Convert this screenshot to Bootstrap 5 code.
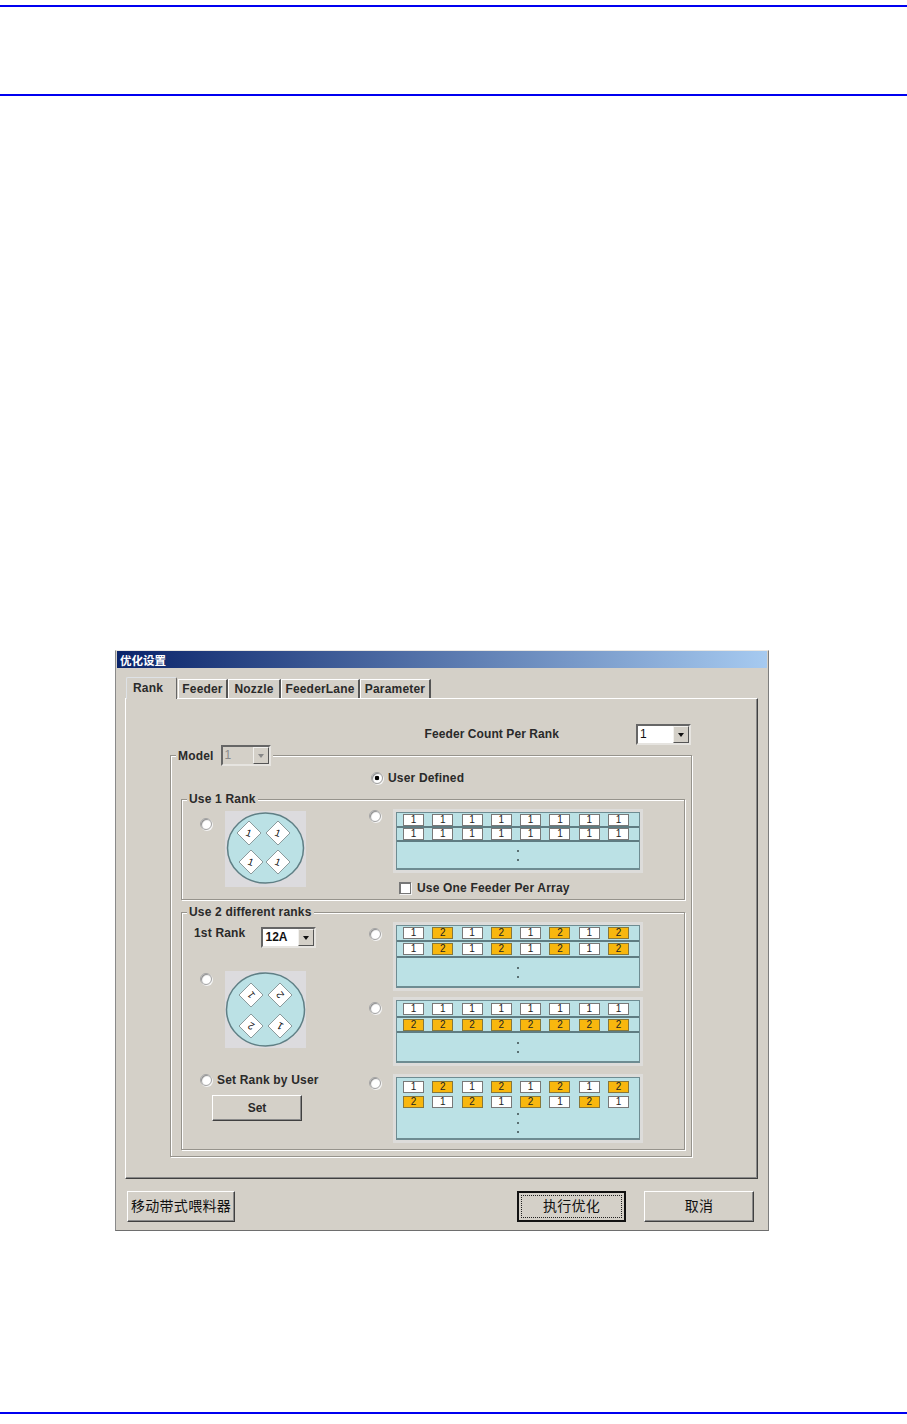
<!DOCTYPE html>
<html lang="zh">
<head>
<meta charset="utf-8">
<title>优化设置</title>
<link href="https://cdn.jsdelivr.net/npm/bootstrap@5.3.0/dist/css/bootstrap.min.css" rel="stylesheet">
<style>
html,body{background:#fff;margin:0}
body{width:907px;height:1424px;overflow:hidden;font-family:"Liberation Sans","Noto Sans CJK SC",sans-serif;font-size:12px;font-weight:700;color:#2a2a2a;letter-spacing:.18px;line-height:14px}
.rule-head{margin-top:5px;height:91px;border-top:2px solid #0000f0;border-bottom:2px solid #0000f0}
.rule-foot{margin-top:181px;border-top:2px solid #0000f0}
.dlg{margin:554px 0 0 115px;width:654px;height:581px;background:#d4d0c8;border:1px solid;border-color:#e9e7e3 #7d7d7d #6e6e6e #8a8a8a;padding:0 1px}
.dlg-title{height:17px;background:linear-gradient(90deg,#0a246a,#a6caf0);color:#fff;font-size:11.5px;line-height:19px;letter-spacing:0;padding-left:3px;font-family:"Noto Sans CJK SC",sans-serif;overflow:hidden}
.dlg-tabs{margin:8px 0 0 9px;height:22px;border:0;flex-wrap:nowrap;gap:0;align-items:flex-end}
.dlg-tabs .nav-link{margin:0;padding:0;height:19px;line-height:19px;text-align:center;color:#2a2a2a;background:#d4d0c8;border:0;border-radius:0;border-left:1px solid #fff;border-top:1px solid #fff;border-right:2px solid #555}
.dlg-tabs .nav-link.active{height:22px;line-height:20px;border-right:1px solid #666;border-radius:2px 2px 0 0;margin-right:1px;text-align:left;padding-left:6px;position:relative;z-index:1;margin-bottom:-1px;background:#d4d0c8;color:#2a2a2a}
.w-a{width:51px}.w-b{width:50px}.w-c{width:53px}.w-d{width:79px}.w-e{width:71px}
.dlg-panel{margin-left:8px;width:633px;height:481px;border:1px solid;border-color:#fff #404040 #404040 #fff;box-shadow:inset -1px -1px 0 #8a8a8a;padding-top:25px}
.count-row{height:21px;margin-right:66px}
.count-label{letter-spacing:.08px;margin-top:-2px}
.count-row .combo{margin-left:77px}
.combo{width:55px;height:21px;flex:none;background:#fff;border:2px solid;border-color:#666 #e6e4e0 #e6e4e0 #666;padding-left:2px;line-height:17px;font-weight:400;color:#111;letter-spacing:0;font-size:12px}
.combo-wide{font-weight:700}
.combo-off{width:50px;background:#d4d0c8;color:#8a8a8a}
.combo-arrow{width:16px;height:17px;background:#d4d0c8;border:1px solid;border-color:#f2f1ee #555 #555 #f2f1ee;position:relative}
.combo-arrow::after{content:"";position:absolute;left:4px;top:6px;border:3.5px solid transparent;border-top:4px solid #111;border-bottom:0}
.combo-off .combo-arrow::after{border-top-color:#888}
.etch{border:1px solid #96938c;box-shadow:1px 1px 0 #fff,inset 1px 1px 0 #fff;position:relative}
.group-model{margin:10px 0 0 44px;width:522px;height:402px;padding-top:15px}
.tag{position:absolute;background:#d4d0c8;padding:0 2px;line-height:14px}
.tag-model{left:5px;top:-11px;gap:7px}
.tag-one{left:5px;top:-8px}
.row-defined{margin-left:200px;height:14px;gap:5px}
.group-one{margin:14px 0 0 10px;width:504px;height:101px}
.group-two{margin:12px 0 0 10px;width:504px;height:238px}
.form-check-input.rd{width:12px;height:12px;margin:0;flex:none;float:none;border:1px solid #a2a2a2;background:#fff;box-shadow:inset 1px 1px 1px #8b8b8b,1px 1px 0 #f4f4f4;--bs-form-check-bg-image:none;opacity:1}
.form-check-input.rd:checked{background:radial-gradient(circle,#000 0,#000 2px,#fff 2.6px);border-color:#a2a2a2}
.form-check-input.ck{width:12px;height:12px;margin:0;float:none;flex:none;border:1px solid #777;border-radius:0;background:#fff;box-shadow:inset 1px 1px 0 #777,1px 1px 0 #f4f4f4}
.col-left{width:187px;flex:none}
.one-left{padding:11px 0 0 18px;gap:13px}
.one-left .rd{margin-top:7px}
.disc-box{width:81px;height:76px;background:#dcdbde;display:block;flex:none}
.disc-tall{height:77px}
.one-right{padding-top:12px}
.opt-row{gap:15px}
.one-right .rd{margin-top:-2px}
.check-row{margin:12px 0 0 30px;gap:6px;line-height:12px}
.rank-row{margin:14px 0 0 12px;height:21px}
.rank-row .combo{margin-left:16px}
.rank-label{margin-top:-1px}
.two-disc{margin:23px 0 0 18px;gap:13px}
.two-disc .rd{margin-top:2px}
.two-set{margin:25px 0 0 18px;gap:5px}
.set-btn{display:block;margin:8px 0 0 30px;width:90px;height:26px}
.btn.flat{--bs-btn-padding-y:0;--bs-btn-padding-x:0;--bs-btn-font-size:12px;--bs-btn-font-weight:700;--bs-btn-line-height:1;--bs-btn-color:#2a2a2a;--bs-btn-bg:#d4d0c8;--bs-btn-hover-bg:#d4d0c8;--bs-btn-hover-color:#2a2a2a;border:1px solid;border-color:#fff #404040 #404040 #fff;border-radius:0;box-shadow:inset -1px -1px 0 #8a8a8a}
.two-right{padding-top:12px}
.rd.off-a{margin-top:3px}.rd.off-b{margin-top:2px}
.gap-a{margin-top:12px}.gap-b{margin-top:14px}
.arr{width:244px;background:#bbe1e5;border:1px solid #6e8c92;border-bottom-width:2px;box-shadow:0 0 0 3px #dddcda;height:63px}
.arr-short{height:58px}
.arr-line{padding:0 10px 0 6px;border-bottom:2px solid #5f7c82;height:16px}
.arr-line.h15{height:15px}.arr-line.h14{height:14px}.arr-line.h17{height:17px}
.arr-line.free{border:0;height:15px;padding-top:2px}
.cl{width:21px;height:12px;border:1px solid #787878;background:#fff;font-size:10px;line-height:10px;font-weight:400;text-align:center;color:#222;letter-spacing:0}
.cl.o{background:#f8b70e;border-color:#87773a}
.arr-foot{gap:7px}
.dt{width:2px;height:2px;background:#3a4a4c;border-radius:50%}
.dlg-foot{margin:12px 0 0 10px;width:628px;height:31px}
.btn.flat.cn-btn{--bs-btn-font-size:14px;--bs-btn-font-weight:400;--bs-btn-color:#111;--bs-btn-hover-color:#111;font-family:"Noto Sans CJK SC",sans-serif;letter-spacing:.3px;padding-bottom:3px}
.w-move{width:108px}
.w-run{width:109px;margin-left:282px;border:2px solid #111!important;box-shadow:none!important;position:relative}
.w-run::after{content:"";position:absolute;inset:2px;border:1px dotted #222}
.w-cancel{width:110px;margin-left:18px}
</style>
</head>
<body>
<div class="rule-head"></div>
<div class="dlg d-flex flex-column">
  <div class="dlg-title">优化设置</div>
  <ul class="nav nav-tabs dlg-tabs">
    <li class="nav-item"><a class="nav-link active w-a" href="#">Rank</a></li>
    <li class="nav-item"><a class="nav-link w-b" href="#">Feeder</a></li>
    <li class="nav-item"><a class="nav-link w-c" href="#">Nozzle</a></li>
    <li class="nav-item"><a class="nav-link w-d" href="#">FeederLane</a></li>
    <li class="nav-item"><a class="nav-link w-e" href="#">Parameter</a></li>
  </ul>
  <div class="dlg-panel">
    <div class="count-row d-flex justify-content-end align-items-center">
      <span class="count-label">Feeder Count Per Rank</span>
      <div class="combo d-flex justify-content-between align-items-center"><span>1</span><span class="combo-arrow"></span></div>
    </div>
    <div class="etch group-model">
      <div class="tag tag-model d-flex align-items-center">
        <span>Model</span>
        <div class="combo combo-off d-flex justify-content-between align-items-center"><span>1</span><span class="combo-arrow"></span></div>
      </div>
      <div class="row-defined d-flex align-items-center"><input class="form-check-input rd" type="radio" name="a" checked><span>User Defined</span></div>

      <div class="etch group-one d-flex">
        <span class="tag tag-one">Use 1 Rank</span>
        <div class="col-left one-left d-flex align-items-start">
          <input class="form-check-input rd" type="radio" name="a">
          <svg class="disc-box" viewBox="0 0 81 76">
            <ellipse cx="40.500" cy="37" rx="38" ry="35" fill="#bbe1e5" stroke="#5f7f85" stroke-width="1.500"/>
            <g fill="#fff" stroke="#8b9a9c"><path d="M24 10l12 12-12 12-12-12z"/><path d="M53 10l12 12-12 12-12-12z"/><path d="M26 39l12 12-12 12-12-12z"/><path d="M53 39l12 12-12 12-12-12z"/></g>
            <g font-size="10" font-weight="400" text-anchor="middle" fill="#111" font-family="Liberation Sans">
              <text transform="translate(24 22) rotate(20)" y="3.500">1</text>
              <text transform="translate(53 22) rotate(20)" y="3.500">1</text>
              <text transform="translate(26 51) rotate(20)" y="3.500">1</text>
              <text transform="translate(53 51) rotate(20)" y="3.500">1</text>
            </g>
          </svg>
        </div>
        <div class="one-right d-flex flex-column">
          <div class="opt-row d-flex align-items-start">
            <input class="form-check-input rd" type="radio" name="a">
            <div class="arr arr-short d-flex flex-column">
              <div class="arr-line h15 d-flex justify-content-between align-items-center"><span class="cl">1</span><span class="cl">1</span><span class="cl">1</span><span class="cl">1</span><span class="cl">1</span><span class="cl">1</span><span class="cl">1</span><span class="cl">1</span></div>
              <div class="arr-line h14 d-flex justify-content-between align-items-center"><span class="cl">1</span><span class="cl">1</span><span class="cl">1</span><span class="cl">1</span><span class="cl">1</span><span class="cl">1</span><span class="cl">1</span><span class="cl">1</span></div>
              <div class="arr-foot flex-grow-1 d-flex flex-column align-items-center justify-content-center"><span class="dt"></span><span class="dt"></span></div>
            </div>
          </div>
          <div class="check-row d-flex align-items-center"><input class="form-check-input ck" type="checkbox"><span>Use One Feeder Per Array</span></div>
        </div>
      </div>

      <div class="etch group-two d-flex">
        <span class="tag tag-one">Use 2 different ranks</span>
        <div class="col-left d-flex flex-column">
          <div class="rank-row d-flex align-items-start"><span class="rank-label">1st Rank</span><div class="combo combo-wide d-flex justify-content-between align-items-center"><span>12A</span><span class="combo-arrow"></span></div></div>
          <div class="two-disc d-flex align-items-start">
            <input class="form-check-input rd" type="radio" name="a">
            <svg class="disc-box disc-tall" viewBox="0 0 81 77">
              <ellipse cx="40.500" cy="38.500" rx="39" ry="36.500" fill="#bbe1e5" stroke="#5f7f85" stroke-width="1.500"/>
              <g fill="#fff" stroke="#8b9a9c"><path d="M26 12l12 12-12 12-12-12z"/><path d="M55 12l12 12-12 12-12-12z"/><path d="M26 43l12 12-12 12-12-12z"/><path d="M55 43l12 12-12 12-12-12z"/></g>
              <g font-size="10" font-weight="400" text-anchor="middle" fill="#111" font-family="Liberation Sans">
                <text transform="translate(26 24) rotate(-125)" y="3.500">1</text>
                <text transform="translate(55 24) rotate(-125)" y="3.500">2</text>
                <text transform="translate(26 55) rotate(-150)" y="3.500">2</text>
                <text transform="translate(55 55) rotate(-150)" y="3.500">1</text>
              </g>
            </svg>
          </div>
          <div class="two-set d-flex align-items-center"><input class="form-check-input rd" type="radio" name="a"><span>Set Rank by User</span></div>
          <button type="button" class="btn flat set-btn">Set</button>
        </div>
        <div class="two-right d-flex flex-column">
          <div class="opt-row d-flex align-items-start">
            <input class="form-check-input rd off-a" type="radio" name="a">
            <div class="arr d-flex flex-column">
              <div class="arr-line d-flex justify-content-between align-items-center"><span class="cl">1</span><span class="cl o">2</span><span class="cl">1</span><span class="cl o">2</span><span class="cl">1</span><span class="cl o">2</span><span class="cl">1</span><span class="cl o">2</span></div>
              <div class="arr-line d-flex justify-content-between align-items-center"><span class="cl">1</span><span class="cl o">2</span><span class="cl">1</span><span class="cl o">2</span><span class="cl">1</span><span class="cl o">2</span><span class="cl">1</span><span class="cl o">2</span></div>
              <div class="arr-foot flex-grow-1 d-flex flex-column align-items-center justify-content-center"><span class="dt"></span><span class="dt"></span></div>
            </div>
          </div>
          <div class="opt-row gap-a d-flex align-items-start">
            <input class="form-check-input rd off-b" type="radio" name="a">
            <div class="arr d-flex flex-column">
              <div class="arr-line h17 d-flex justify-content-between align-items-center"><span class="cl">1</span><span class="cl">1</span><span class="cl">1</span><span class="cl">1</span><span class="cl">1</span><span class="cl">1</span><span class="cl">1</span><span class="cl">1</span></div>
              <div class="arr-line h15 d-flex justify-content-between align-items-center"><span class="cl o">2</span><span class="cl o">2</span><span class="cl o">2</span><span class="cl o">2</span><span class="cl o">2</span><span class="cl o">2</span><span class="cl o">2</span><span class="cl o">2</span></div>
              <div class="arr-foot flex-grow-1 d-flex flex-column align-items-center justify-content-center"><span class="dt"></span><span class="dt"></span></div>
            </div>
          </div>
          <div class="opt-row gap-b d-flex align-items-start">
            <input class="form-check-input rd" type="radio" name="a">
            <div class="arr d-flex flex-column">
              <div class="arr-line free d-flex justify-content-between align-items-center"><span class="cl">1</span><span class="cl o">2</span><span class="cl">1</span><span class="cl o">2</span><span class="cl">1</span><span class="cl o">2</span><span class="cl">1</span><span class="cl o">2</span></div>
              <div class="arr-line free d-flex justify-content-between align-items-center"><span class="cl o">2</span><span class="cl">1</span><span class="cl o">2</span><span class="cl">1</span><span class="cl o">2</span><span class="cl">1</span><span class="cl o">2</span><span class="cl">1</span></div>
              <div class="arr-foot flex-grow-1 d-flex flex-column align-items-center justify-content-center"><span class="dt"></span><span class="dt"></span><span class="dt"></span></div>
            </div>
          </div>
        </div>
      </div>
    </div>
  </div>
  <div class="dlg-foot d-flex">
    <button type="button" class="btn flat cn-btn w-move">移动带式喂料器</button>
    <button type="button" class="btn flat cn-btn w-run">执行优化</button>
    <button type="button" class="btn flat cn-btn w-cancel">取消</button>
  </div>
</div>
<div class="rule-foot"></div>
<script src="https://cdn.jsdelivr.net/npm/bootstrap@5.3.0/dist/js/bootstrap.bundle.min.js"></script>
</body>
</html>
